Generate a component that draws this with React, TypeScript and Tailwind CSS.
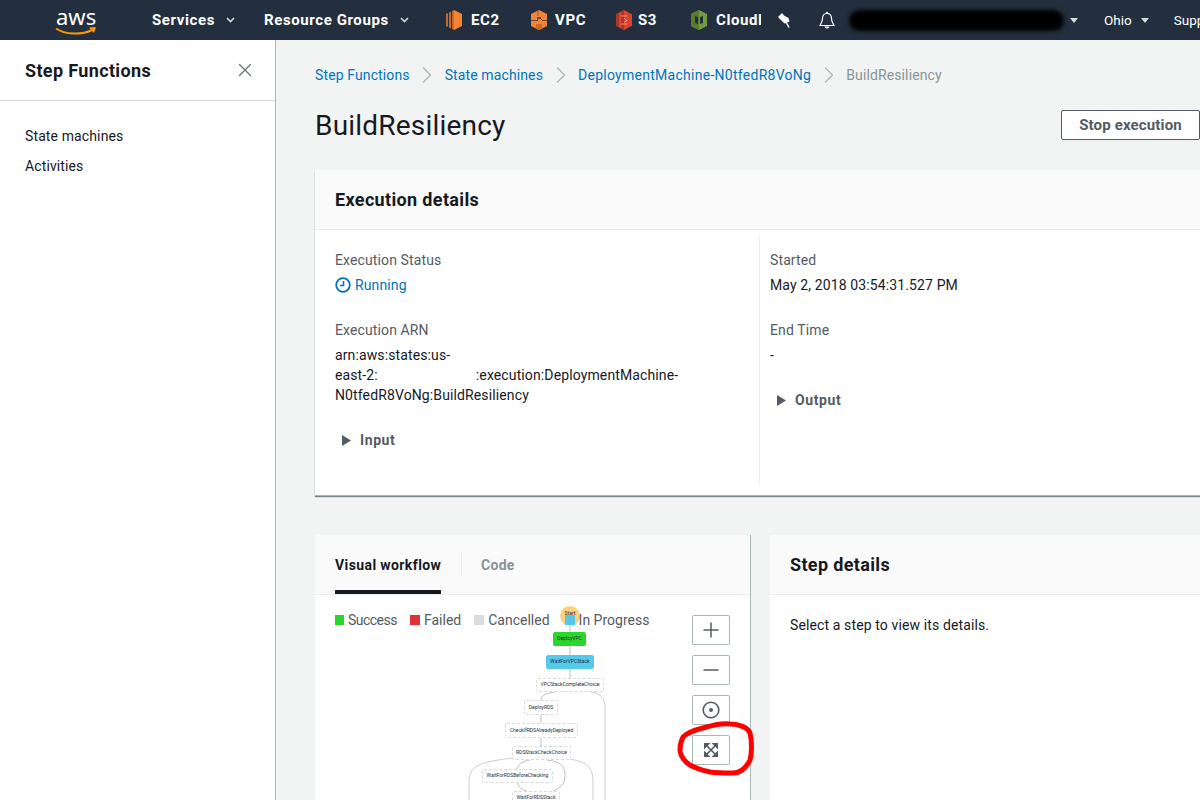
import { ChevronRight, X, Plus, Minus } from "lucide-react";

const sans = "font-['Roboto',sans-serif]";

function Caret({ className = "" }: { className?: string }) {
  return (
    <svg width="9" height="6" viewBox="0 0 9 6" className={className}>
      <path d="M1 1l3.500 3.500L8 1" fill="none" stroke="#d5dbdb" strokeWidth="1.600" />
    </svg>
  );
}

function Ec2Icon() {
  return (
    <svg width="18" height="20" viewBox="0 0 18 20">
      <path d="M9 0l8 4v12l-8 4z" fill="#f58536" />
      <path d="M9 0v20l-2-1V1zM6 1.500v17l-2-1v-15zM3 3v14l-2-1V4z" fill="#c96a24" />
    </svg>
  );
}

function VpcIcon() {
  return (
    <svg width="18" height="20" viewBox="0 0 18 20">
      <path d="M9 0l8 4v12l-8 4-8-4V4z" fill="#f58536" />
      <path d="M1 10h6V7h4v3h6v1h-5v-2h-4v2H1z" fill="#232f3e" opacity="0.7" />
      <path d="M9 0v6H7V1zM6 14h6v5l-3 1-3-1z" fill="#c96a24" />
    </svg>
  );
}

function S3Icon() {
  return (
    <svg width="18" height="20" viewBox="0 0 18 20">
      <path d="M1 4l3-1 1-1 4-2 4 2 1 1 3 1v12l-3 1-1 1-4 2-4-2-1-1-3-1z" fill="#d9442f" />
      <path d="M1 4l3-1v14l-3-1zM9 0v20l-3-2V2z" fill="#a9362a" />
      <path d="M6 6h6M6 14h6M9 8l3 3-3 1" fill="none" stroke="#f2a090" strokeWidth="0.800" />
    </svg>
  );
}

function CloudIcon() {
  return (
    <svg width="18" height="20" viewBox="0 0 18 20">
      <path d="M9 0l8 4v12l-8 4-8-4V4z" fill="#759c3e" />
      <path d="M9 0v20l-8-4V4z" fill="#5a7d2d" />
      <path d="M5 6l3 1v7l-3-1zM13 6l-3 1v7l3-1z" fill="#232f3e" />
    </svg>
  );
}

function TopBar() {
  return (
    <header className="flex h-10 shrink-0 items-center bg-[#232f3e] text-[15px] font-bold tracking-[0.6px] text-white">
      <div className="ml-[55px] flex w-[97px] shrink-0 flex-col">
        <span className="ml-[1px] h-[22px] font-['Noto_Sans',sans-serif] text-[22px] font-normal leading-[22px] tracking-normal">aws</span>
        <svg width="42" height="9" viewBox="0 0 42 9">
          <path d="M1 1.500c9 6 25 7 36 1.500" fill="none" stroke="#f90" strokeWidth="2" />
          <path d="M34 0.500l7-0.500-2 6z" fill="#f90" />
        </svg>
      </div>
      <div className="flex w-[112px] shrink-0 items-center">
        <span>Services</span>
        <Caret className="ml-[11px]" />
      </div>
      <div className="flex w-[181px] shrink-0 items-center">
        <span>Resource Groups</span>
        <Caret className="ml-[11px]" />
      </div>
      <div className="flex w-[85px] shrink-0 items-center gap-[8px]"><Ec2Icon />EC2</div>
      <div className="flex w-[85px] shrink-0 items-center gap-[7px]"><VpcIcon />VPC</div>
      <div className="flex w-[75px] shrink-0 items-center gap-[5px]"><S3Icon />S3</div>
      <div className="flex w-[88px] shrink-0 items-center gap-[8px]">
        <CloudIcon />
        <span className="w-[45px] overflow-hidden">Cloudl</span>
      </div>
      <div className="w-[41px] shrink-0">
        <svg width="12" height="15" viewBox="0 0 12 15" fill="#fff">
          <path d="M0 4 4 0 6 2.500 10.500 5 11.500 8.500 6.500 10.500 3 7z" />
          <path d="M8 9l3 5.500" stroke="#fff" strokeWidth="1.500" />
        </svg>
      </div>
      <div className="w-[30px] shrink-0">
        <svg width="16" height="19" viewBox="0 0 16 19">
          <path d="M8 2.500c-3 0-4.500 2-4.500 5 0 4-2 5.500-2.500 7h14c-.5-1.500-2.500-3-2.500-7 0-3-1.500-5-4.500-5z" fill="none" stroke="#fff" strokeWidth="1.200" />
          <circle cx="8" cy="1.800" r="1" fill="#fff" />
          <path d="M5.500 15.500h5a2.500 2 0 0 1-5 0z" fill="#fff" />
        </svg>
      </div>
      <div className="h-[21px] w-[215px] shrink-0 rounded-full bg-black blur-[2px]" />
      <svg width="8" height="5" viewBox="0 0 8 5" className="ml-[6px] shrink-0"><path d="M0 0h8L4 5z" fill="#d5dbdb" /></svg>
      <span className="ml-[26px] text-[13.5px] font-normal tracking-normal">Ohio</span>
      <svg width="8" height="5" viewBox="0 0 8 5" className="ml-[9px] shrink-0"><path d="M0 0h8L4 5z" fill="#d5dbdb" /></svg>
      <span className="ml-[25px] text-[13.5px] font-normal tracking-normal">Support</span>
    </header>
  );
}

function Crumb({ label, last, wide }: { label: string; last?: boolean; wide?: boolean }) {
  return last ? (
    <span className="text-[#879596]">{label}</span>
  ) : (
    <>
      <span className={wide ? "tracking-[0.27px] text-[#0073bb]" : "text-[#0073bb]"}>{label}</span>
      <ChevronRight size={28} strokeWidth={1.1} className="mx-[3.5px] text-[#aab7b8]" />
    </>
  );
}

function Field({ label, children }: { label: string; children: React.ReactNode }) {
  return (
    <div>
      <div className="h-[20px] leading-[20px] text-[#545b64]">{label}</div>
      <div className="mt-[5px] leading-[20px] text-[#16191f]">{children}</div>
    </div>
  );
}

function Expand({ label }: { label: string }) {
  return (
    <div className="flex items-center text-[14px] font-bold tracking-[0.6px] text-[#545b64]">
      <svg width="9" height="11" viewBox="0 0 9 11"><path d="M0 0l9 5.500-9 5.500z" fill="#545b64" /></svg>
      <span className="ml-[9px]">{label}</span>
    </div>
  );
}

function Legend({ color, label, className = "" }: { color: string; label: string; className?: string }) {
  return (
    <div className={`flex items-center ${className}`}>
      <div className="h-[10px] w-[10px]" style={{ backgroundColor: color }} />
      <span className="ml-[4px]">{label}</span>
    </div>
  );
}

function ZoomBtn({ children }: { children: React.ReactNode }) {
  return (
    <div className="flex h-[30px] w-[38px] items-center justify-center rounded-[2px] border border-[#aab7b8] bg-white text-[#545b64]">
      {children}
    </div>
  );
}

const dashed = "border-dashed border-[#d5dbdb] bg-white rounded-[2px]";

const nodes = [
  { label: "DeployVPC", x: 238, y: 22, w: 33, h: 14, cls: "bg-[#2bd62b] border-[#2bd62b] rounded-[2px]" },
  { label: "WaitForVPCStack", x: 231, y: 45, w: 48, h: 14, cls: "bg-[#57c7ea] border-[#57c7ea] rounded-[2px]" },
  { label: "VPCStackCompleteChoice", x: 221, y: 68, w: 68, h: 14, cls: dashed },
  { label: "DeployRDS", x: 209, y: 90, w: 34, h: 15, cls: dashed },
  { label: "CheckIfRDSAlreadyDeployed", x: 190, y: 113, w: 73, h: 15, cls: dashed },
  { label: "RDSStackCheckChoice", x: 197, y: 136, w: 59, h: 14, cls: dashed },
  { label: "WaitForRDSBeforeChecking", x: 167, y: 159, w: 71, h: 14, cls: dashed },
  { label: "WaitForRDSStack", x: 197, y: 181, w: 48, h: 14, cls: dashed },
];

function Workflow() {
  return (
    <div className="absolute left-0 top-[75px] h-[190px] w-[435px]">
      <svg width="435" height="190" className="absolute left-0 top-0" fill="none" stroke="#a8aeb0" strokeWidth="0.800">
        <path d="M255 16v6M255 36v9M255 59v9M240 82c-8 1-14 3-14 8M226 105v8M226 128v8" />
        <path d="M276 82c9 1 14 6 14 15v93" stroke="#c8cdce" strokeWidth="1" />
        <path d="M197 148c-27 4-43 5-43 24v18" stroke="#c8cdce" strokeWidth="1" />
        <path d="M255 149c15 3 23 6 23 23v18" stroke="#c8cdce" strokeWidth="1" />
        <path d="M215 150c-7 1-12 4-13 9M232 150c13 2 18 5 18 15 0 10-5 13-12 16M203 173c0 5 5 7 9 8" />
      </svg>
      {nodes.map((n) => (
        <div
          key={n.label}
          className={`absolute flex items-center justify-center overflow-hidden whitespace-nowrap border pb-[1px] text-[5px] leading-none tracking-normal text-[#232f3e] ${n.cls}`}
          style={{ left: n.x, top: n.y, width: n.w, height: n.h }}
        >
          {n.label}
        </div>
      ))}
    </div>
  );
}

export default function App() {
  return (
    <div className={`flex h-[800px] w-[1200px] flex-col overflow-hidden bg-[#f2f3f3] text-[14px] tracking-[0.12px] ${sans}`}>
      <TopBar />
      <div className="flex min-h-0 flex-1">
        <aside className="w-[276px] shrink-0 border-r border-[#aab7b8] bg-white">
          <div className="flex h-[61px] items-center justify-between border-b border-[#d5dbdb] pl-[25px] pr-[19px]">
            <span className="text-[18px] font-bold tracking-[0.35px] text-[#16191f]">Step Functions</span>
            <X size={22} strokeWidth={1.400} className="text-[#687078]" />
          </div>
          <nav className="mt-[25px] space-y-[10px] pl-[25px] leading-[20px] text-[#16191f]">
            <div>State machines</div>
            <div>Activities</div>
          </nav>
        </aside>

        <main className="w-[900px] shrink-0 pl-[39px]">
          <div className="mt-[25px] flex h-[20px] w-[1000px] items-center">
            <Crumb label="Step Functions" />
            <Crumb label="State machines" />
            <Crumb label="DeploymentMachine-N0tfedR8VoNg" wide />
            <Crumb label="BuildResiliency" last />
          </div>
          <div className="mt-[25px] flex h-[30px] w-[885px] items-center justify-between">
            <h1 className="pt-[1px] text-[28px] leading-[30px] tracking-[0.2px] text-[#16191f]">BuildResiliency</h1>
            <button className="h-[30px] w-[139px] rounded-[2px] border border-[#545b64] bg-white text-[15px] font-bold tracking-[0.15px] text-[#545b64]">
              Stop execution
            </button>
          </div>

          <section className="mt-[30px] h-[326px] w-[885px] border-b border-[#aab7b8] bg-white shadow-[0_1px_1px_0_rgba(0,28,36,0.5)]">
            <div className="flex h-[60px] items-center border-b border-[#eaeded] bg-[#fafafa] pl-[20px] text-[18px] font-bold tracking-[0.35px] text-[#16191f]">
              Execution details
            </div>
            <div className="flex h-[255px] pt-[5px]">
              <div className="w-[445px] border-r border-[#eaeded] pl-[20px] pr-[60px]">
                <div className="pt-[15px]">
                  <Field label="Execution Status">
                    <span className="flex items-center text-[#0073bb]">
                      <svg width="16" height="16" viewBox="0 0 16 16">
                        <circle cx="8" cy="8" r="6.800" fill="none" stroke="#0073bb" strokeWidth="1.800" />
                        <path d="M8.500 4v4.500H5" fill="none" stroke="#0073bb" strokeWidth="1.600" />
                      </svg>
                      <span className="ml-[4px]">Running</span>
                    </span>
                  </Field>
                </div>
                <div className="mt-[25px]">
                  <Field label="Execution ARN">
                    <span className="block">
                      arn:aws:states:us-
                      <br />
                      east-2:<span className="inline-block w-[98px]" />:execution:DeploymentMachine-
                      <br />
                      N0tfedR8VoNg:BuildResiliency
                    </span>
                  </Field>
                </div>
                <div className="ml-[7px] mt-[25px]">
                  <Expand label="Input" />
                </div>
              </div>
              <div className="pl-[10px] pt-[15px]">
                <Field label="Started">May 2, 2018 03:54:31.527 PM</Field>
                <div className="mt-[25px]">
                  <Field label="End Time">-</Field>
                </div>
                <div className="ml-[7px] mt-[25px]">
                  <Expand label="Output" />
                </div>
              </div>
            </div>
          </section>

          <div className="mt-[39px] flex w-[885px] gap-[19px]">
            <section className="relative h-[300px] w-[436px] shrink-0 border-r border-[#aab7b8] bg-white">
              <div className="flex h-[60px] border-b border-[#eaeded] bg-[#fafafa] pl-[20px]">
                <div className="flex h-[59px] w-[106px] items-center whitespace-nowrap border-b-[4px] border-[#16191f] pt-[5px] font-bold tracking-[0.4px] text-[#16191f]">
                  Visual workflow
                </div>
                <div className="my-[17px] ml-[20px] border-l border-[#eaeded] pl-[19px] font-bold leading-[26px] tracking-[0.3px] text-[#879596]">Code</div>
              </div>
              <Workflow />
              {/* start marker sits under the legend */}
              <div className="absolute left-[245px] top-[71px] flex h-[20px] w-[20px] items-start justify-center rounded-full bg-[#fbd17a] pt-[5px] text-[5px] leading-none tracking-normal text-[#232f3e]">
                Start
              </div>
              <div className="relative mt-[15px] flex h-[20px] items-center pl-[20px] tracking-normal text-[#545b64]">
                <Legend color="#2bd62b" label="Success" className="w-[62px] tracking-[-0.5px]" />
                <Legend color="#df3232" label="Failed" className="ml-[13px]" />
                <Legend color="#dcdcdc" label="Cancelled" className="ml-[13px]" />
                <Legend color="#57c7ea" label="In Progress" className="ml-[15px]" />
              </div>
              <div className="absolute left-[377px] top-[80px] flex flex-col gap-[10px]">
                <ZoomBtn><Plus size={24} strokeWidth={1.500} /></ZoomBtn>
                <ZoomBtn><Minus size={24} strokeWidth={1.500} /></ZoomBtn>
                <ZoomBtn>
                  <svg width="18" height="18" viewBox="0 0 18 18">
                    <circle cx="9" cy="9" r="7.800" fill="none" stroke="#545b64" strokeWidth="1.600" />
                    <circle cx="9" cy="9" r="2" fill="#545b64" />
                  </svg>
                </ZoomBtn>
                <ZoomBtn>
                  <svg width="16" height="16" viewBox="0 0 16 16" fill="#545b64">
                    <path d="M1 1h6.500L1 7.500zM15 1v6.500L8.500 1zM1 15V8.500L7.500 15zM15 15H8.500L15 8.500z" />
                    <path d="M3 3l10 10M13 3L3 13" stroke="#545b64" strokeWidth="1.600" />
                  </svg>
                </ZoomBtn>
              </div>
              {/* hand-drawn annotation from the screenshot */}
              <svg width="85" height="62" viewBox="0 0 85 62" className="absolute left-[360px] top-[185px]" fill="none">
                <path d="M28 8C38 5 48 3 55 4c10 0 18 4 20 9 2 8 2 20 0 27-4 8-10 13-17 13-8 0-16 0-23-1-9-2-18-5-23-9-4-4-7-8-7-13 0-5 1-9 3-13 4-4 12-7 20-9z" stroke="#f00" strokeWidth="5" />
              </svg>
            </section>
            <section className="h-[300px] flex-1 bg-white">
              <div className="flex h-[60px] items-center border-b border-[#eaeded] bg-[#fafafa] pl-[20px] text-[18px] font-bold tracking-[0.35px] text-[#16191f]">
                Step details
              </div>
              <div className="pl-[20px] pt-[20px] leading-[20px] text-[#16191f]">Select a step to view its details.</div>
            </section>
          </div>
        </main>
      </div>
    </div>
  );
}
